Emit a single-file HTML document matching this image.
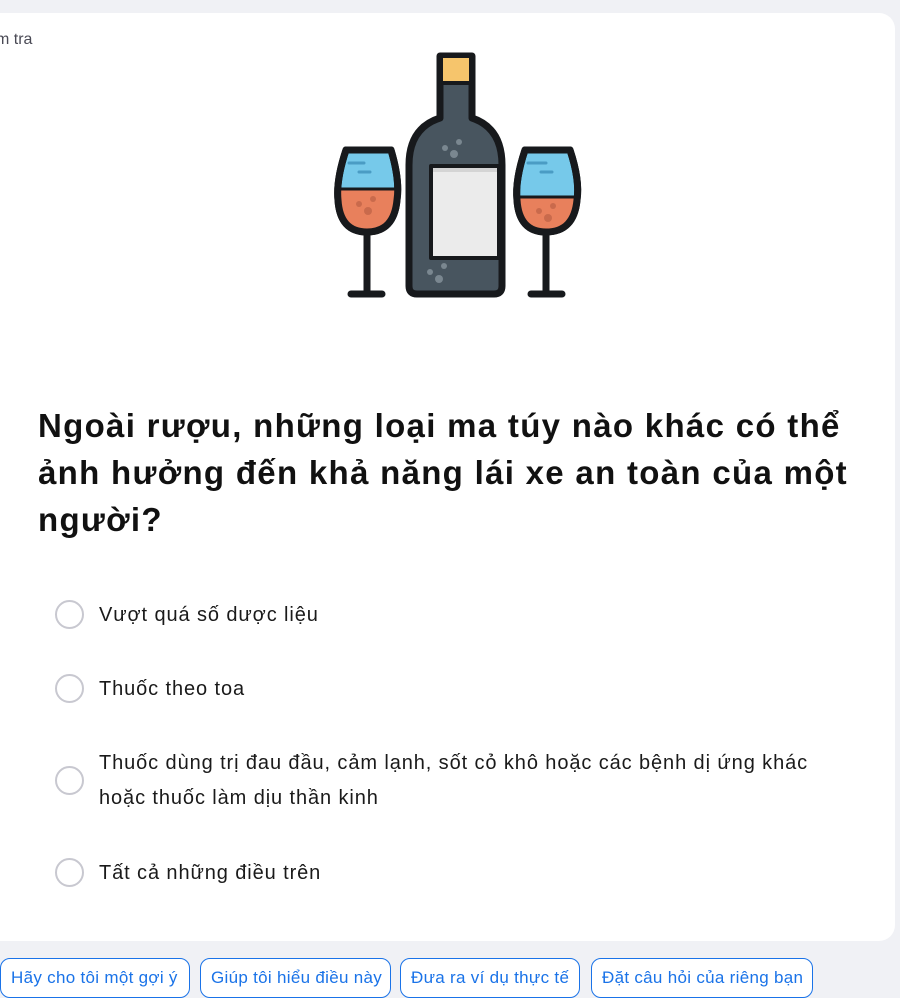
<!DOCTYPE html>
<html><head><meta charset="utf-8"><style>
html,body{margin:0;padding:0;width:900px;height:980px;overflow:hidden;background:#f0f1f5;font-family:"Liberation Sans","DejaVu Sans",sans-serif;}
.card{position:absolute;left:-20px;top:13px;width:915px;height:928px;background:#fff;border-radius:16px;}
.crumb{position:absolute;left:-4px;top:31px;font-size:16px;color:#4a4a55;}
.q{position:absolute;left:38px;top:402px;width:860px;font-size:33px;font-weight:bold;line-height:47px;color:#111;letter-spacing:1.3px;}
.opt{position:absolute;left:55px;font-size:20px;color:#1a1a1a;line-height:35px;letter-spacing:0.9px;}
.opt .c{position:absolute;left:0;width:25px;height:25px;border:2px solid #c8c8d0;border-radius:50%;}
.opt .t{position:absolute;left:44px;width:780px;white-space:nowrap;}
.btn{position:absolute;top:958px;height:40px;border:1.5px solid #1a73e8;border-radius:10px;background:#fff;color:#1a73e8;font-size:17px;line-height:20px;padding:9px 10px 0;box-sizing:border-box;white-space:nowrap;letter-spacing:0.3px;}
</style></head><body>
<div class="card"></div>
<div class="crumb">m tra</div>
<svg style="position:absolute;left:0;top:0" width="900" height="320">
 <g stroke="#17191c" stroke-width="7" stroke-linejoin="round">
  <path d="M346 150 L391 150 Q400 180 397 200 Q394 232 367 232 Q340 232 338 200 Q336 180 346 150 Z" fill="#76c9ea"/>
  <path d="M339 190 L396 190 Q396 230 367 230 Q338 230 339 190Z" fill="#e8805c" stroke="none"/>
  <line x1="339" y1="189" x2="396" y2="189" stroke-width="3"/>
  <path d="M346 150 L391 150 Q400 180 397 200 Q394 232 367 232 Q340 232 338 200 Q336 180 346 150 Z" fill="none"/>
  <line x1="367" y1="232" x2="367" y2="293"/>
  <line x1="351" y1="294" x2="382" y2="294" stroke-linecap="round"/>
  <path d="M525 150 L570 150 Q580 180 577 200 Q574 232 546 232 Q519 232 517 200 Q515 180 525 150 Z" fill="#76c9ea"/>
  <path d="M518 198 L576 198 Q576 230 546 230 Q518 230 518 198Z" fill="#e8805c" stroke="none"/>
  <line x1="518" y1="197" x2="576" y2="197" stroke-width="3"/>
  <path d="M525 150 L570 150 Q580 180 577 200 Q574 232 546 232 Q519 232 517 200 Q515 180 525 150 Z" fill="none"/>
  <line x1="546" y1="232" x2="546" y2="293"/>
  <line x1="531" y1="294" x2="562" y2="294" stroke-linecap="round"/>
  <path d="M440 56 L472 56 L472 118 Q502 128 502 165 L502 286 Q502 294 494 294 L417 294 Q409 294 409 286 L409 165 Q409 128 440 118 Z" fill="#48555f"/>
  <rect x="443" y="58" width="26" height="24" fill="#f6c56c" stroke="none"/>
  <line x1="441" y1="83" x2="471" y2="83" stroke-width="4"/>
  <rect x="431" y="166" width="68" height="92" fill="#ebebeb" stroke-width="4"/>
 </g>
 <rect x="433" y="168" width="64" height="4" fill="#d4d4d4"/>
 <g fill="#7a8790"><circle cx="445" cy="148" r="3"/><circle cx="459" cy="142" r="3"/><circle cx="454" cy="154" r="4"/>
 <circle cx="430" cy="272" r="3"/><circle cx="444" cy="266" r="3"/><circle cx="439" cy="279" r="4"/></g>
 <g fill="#c96a4c"><circle cx="359" cy="204" r="3"/><circle cx="373" cy="199" r="3"/><circle cx="368" cy="211" r="4"/>
 <circle cx="539" cy="211" r="3"/><circle cx="553" cy="206" r="3"/><circle cx="548" cy="218" r="4"/></g>
 <g stroke="#4a9cc4" stroke-width="3" stroke-linecap="round"><line x1="349" y1="163" x2="364" y2="163"/><line x1="359" y1="172" x2="370" y2="172"/>
 <line x1="528" y1="163" x2="546" y2="163"/><line x1="541" y1="172" x2="552" y2="172"/></g>
</svg>
<div class="q">Ngoài rượu, những loại ma túy nào khác có thể<br>ảnh hưởng đến khả năng lái xe an toàn của một<br>người?</div>
<div class="opt" style="top:598px"><div class="c" style="top:2px"></div><div class="t">Vượt quá số dược liệu</div></div>
<div class="opt" style="top:672px"><div class="c" style="top:2px"></div><div class="t">Thuốc theo toa</div></div>
<div class="opt" style="top:746px"><div class="c" style="top:20px"></div><div class="t">Thuốc dùng trị đau đầu, cảm lạnh, sốt cỏ khô hoặc các bệnh dị ứng khác<br>hoặc thuốc làm dịu thần kinh</div></div>
<div class="opt" style="top:856px"><div class="c" style="top:2px"></div><div class="t">Tất cả những điều trên</div></div>
<div class="btn" style="left:0;width:190px">Hãy cho tôi một gợi ý</div>
<div class="btn" style="left:200px;width:191px">Giúp tôi hiểu điều này</div>
<div class="btn" style="left:400px;width:180px">Đưa ra ví dụ thực tế</div>
<div class="btn" style="left:591px;width:222px">Đặt câu hỏi của riêng bạn</div>
</body></html>
